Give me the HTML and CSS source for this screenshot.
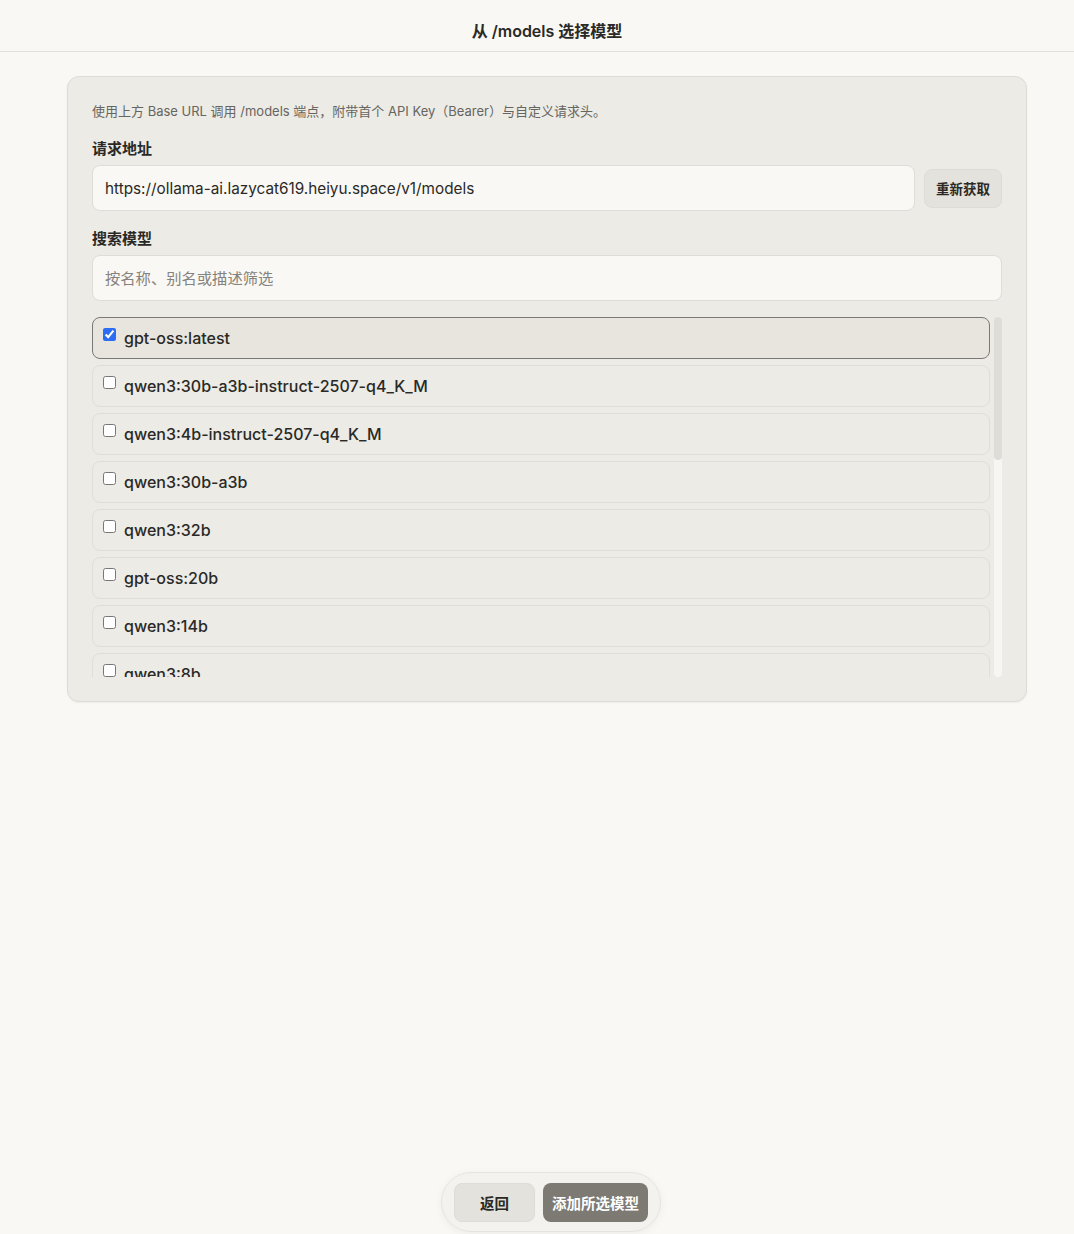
FILE: index.html
```html
<!DOCTYPE html>
<html lang="zh-CN">
<head>
<meta charset="utf-8">
<meta name="viewport" content="width=device-width,initial-scale=1.0">
<title>从 /models 选择模型</title>
<link rel="stylesheet" href="styles.css">
</head>
<body>
  <header class="top">从 /models 选择模型</header>

  <main class="page">
    <section class="card">
      <p class="hint">使用上方 Base URL 调用 /models 端点，附带首个 API Key（Bearer）与自定义请求头。</p>

      <label class="label">请求地址</label>
      <div class="urlRow">
        <input class="field" type="text" value="https://ollama-ai.lazycat619.heiyu.space/v1/models">
        <button class="btnGhost">重新获取</button>
      </div>

      <label class="label">搜索模型</label>
      <input class="field" type="text" placeholder="按名称、别名或描述筛选">

      <div class="listWrap">
        <ul class="models">
          <li class="model picked"><label><input type="checkbox" checked><span>gpt-oss:latest</span></label></li>
          <li class="model"><label><input type="checkbox"><span>qwen3:30b-a3b-instruct-2507-q4_K_M</span></label></li>
          <li class="model"><label><input type="checkbox"><span>qwen3:4b-instruct-2507-q4_K_M</span></label></li>
          <li class="model"><label><input type="checkbox"><span>qwen3:30b-a3b</span></label></li>
          <li class="model"><label><input type="checkbox"><span>qwen3:32b</span></label></li>
          <li class="model"><label><input type="checkbox"><span>gpt-oss:20b</span></label></li>
          <li class="model"><label><input type="checkbox"><span>qwen3:14b</span></label></li>
          <li class="model"><label><input type="checkbox"><span>qwen3:8b</span></label></li>
          <li class="model"><label><input type="checkbox"><span>qwen3:4b</span></label></li>
          <li class="model"><label><input type="checkbox"><span>qwen3:1.7b</span></label></li>
          <li class="model"><label><input type="checkbox"><span>qwen3:0.6b</span></label></li>
          <li class="model"><label><input type="checkbox"><span>deepseek-r1:14b</span></label></li>
          <li class="model"><label><input type="checkbox"><span>deepseek-r1:8b</span></label></li>
          <li class="model"><label><input type="checkbox"><span>gemma3:12b</span></label></li>
          <li class="model"><label><input type="checkbox"><span>gemma3:4b</span></label></li>
          <li class="model"><label><input type="checkbox"><span>llama3.2:3b</span></label></li>
          <li class="model"><label><input type="checkbox"><span>mistral:7b</span></label></li>
          <li class="model"><label><input type="checkbox"><span>nomic-embed-text:latest</span></label></li>
        </ul>
        <!-- scroll track, drawn by hand since the browser hides native bars -->
        <div class="track"><div class="thumb"></div></div>
      </div>
    </section>
  </main>

  <footer class="actions">
    <button class="btnGhost btnBack">返回</button>
    <button class="btnPrimary">添加所选模型</button>
  </footer>
</body>
</html>
```

FILE: styles.css
```css
html { height: 100%; }
body {
  margin: 0;
  min-height: 100%;
  background: #f9f8f4;
  color: #2a2926;
  font-family: "Inter", "Noto Sans CJK SC", sans-serif;
}

.top {
  height: 52px;
  border-bottom: 1px solid #e2e0db;
  display: flex;
  align-items: center;
  justify-content: center;
  font-size: 16px;
  font-weight: 600;
  padding: 8px 0 0 20px;
  box-sizing: border-box;
}

.page { padding: 24px 47px 0 67px; }

.card {
  background: #ecebe6;
  border: 1px solid #dedcd6;
  border-radius: 12px;
  padding: 24px 24px 24px 24px;
  box-shadow: 0 1px 2px rgba(0,0,0,0.05);
  display: flex;
  flex-direction: column;
}

.hint { margin: 0 0 18px 0; font-size: 13px; color: #67655f; line-height: 20px; }

.label { font-size: 15px; font-weight: 700; line-height: 20px; margin-bottom: 6px; color: #2a2926; }

.urlRow { display: flex; align-items: center; gap: 9px; margin-bottom: 18px; }
.urlRow .field { flex: 1; }

.field {
  box-sizing: border-box;
  height: 46px;
  width: 100%;
  padding: 0 12px;
  border: 1px solid #dfddd7;
  border-radius: 8px;
  background: #f9f8f4;
  font-family: inherit;
  font-size: 15.3px;
  color: #2a2926;
  outline: none;
}
.field::placeholder { color: #85837d; }

.btnGhost {
  height: 39px;
  padding: 0 11px;
  border: 1px solid #dedcd6;
  border-radius: 8px;
  background: #e4e2dc;
  font-family: inherit;
  font-size: 13.5px;
  font-weight: 600;
  color: #2a2926;
}

.listWrap { display: flex; gap: 4px; margin-top: 16px; height: 360px; }

.models {
  flex: 1;
  list-style: none;
  margin: 0;
  padding: 0;
  overflow-y: auto;
  scrollbar-width: none;
  display: flex;
  flex-direction: column;
  gap: 6px;
}

.track { width: 8px; background: #f7f6f2; border-radius: 4px; }
.thumb { height: 143px; background: #e0ddd8; border-radius: 4px; }

.model {
  flex: none;
  box-sizing: border-box;
  height: 42px;
  border: 1px solid #e0ded8;
  border-radius: 8px;
  background: #ecebe6;
}
.model.picked { border-color: #7b7975; background: #e8e5df; }
.model label {
  display: flex;
  align-items: center;
  height: 100%;
  padding: 0 10px;
  gap: 8px;
  font-size: 16px;
  font-weight: 500;
}
.model input { margin: 0; width: 13px; height: 13px; position: relative; top: -4px; accent-color: #2b6ef5; }

.actions {
  position: fixed;
  left: 441px;
  bottom: 2px;
  box-sizing: border-box;
  width: 220px;
  height: 60px;
  padding: 0 12px;
  display: flex;
  align-items: center;
  gap: 8px;
  background: #f3f2ee;
  border: 1px solid #e6e4df;
  border-radius: 30px;
  box-shadow: 0 2px 8px rgba(0,0,0,0.05);
}
.btnBack { width: 82px; font-size: 14.5px; }
.btnPrimary {
  width: 106px;
  height: 39px;
  border: none;
  border-radius: 8px;
  background: #7d7a74;
  color: #fff;
  font-family: inherit;
  font-size: 14.5px;
  font-weight: 600;
}
```
